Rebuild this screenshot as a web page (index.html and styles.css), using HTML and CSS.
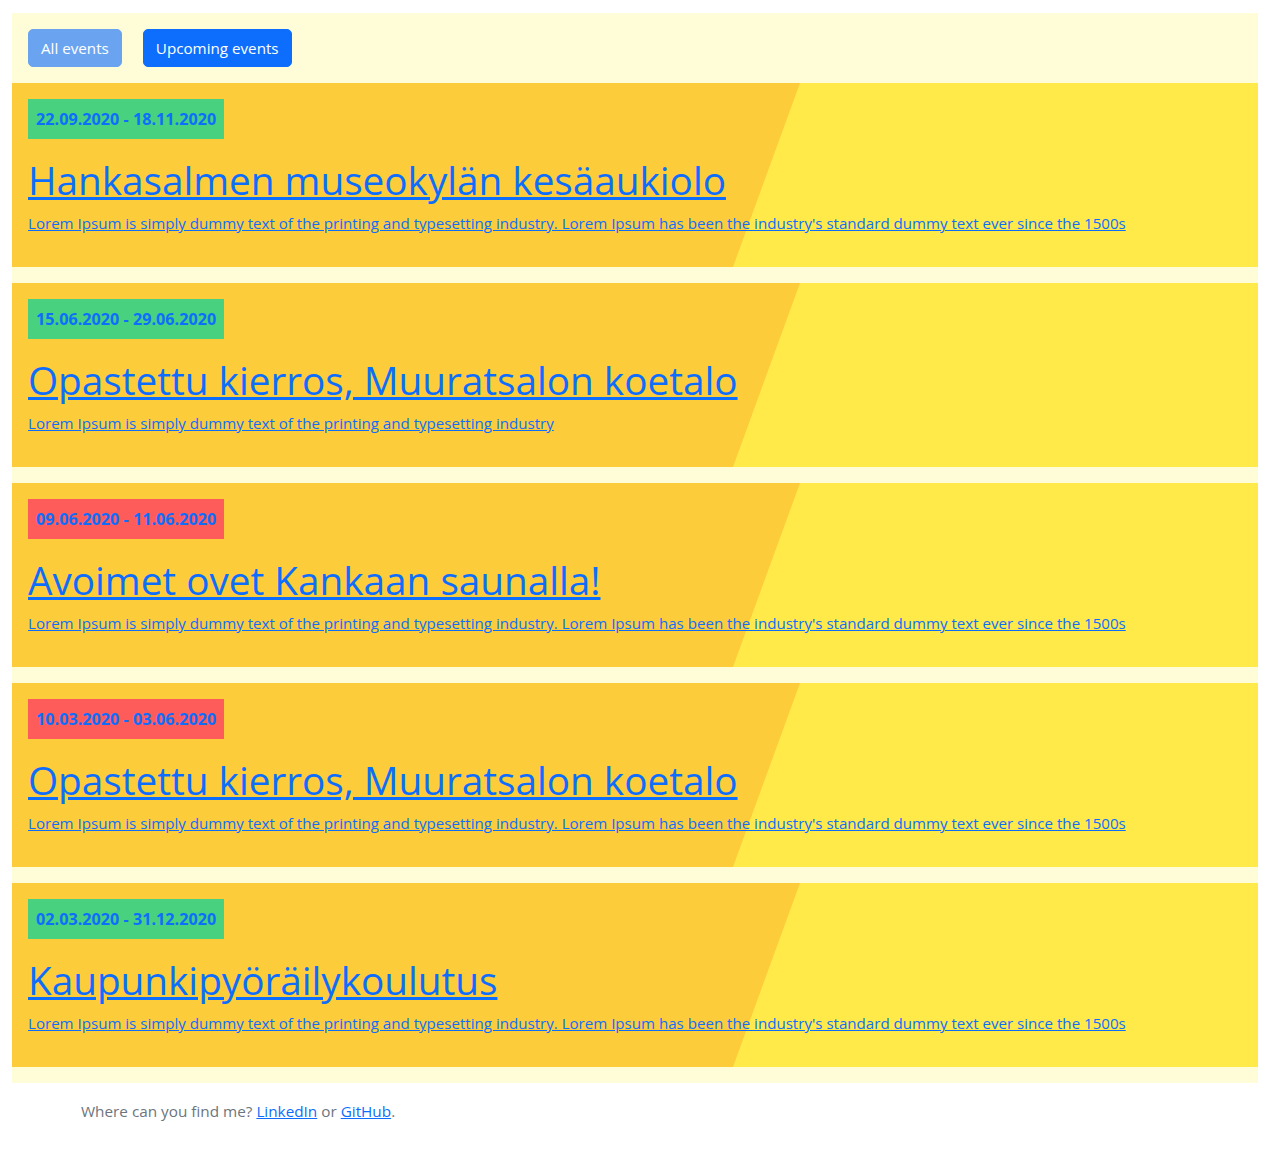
FILE: index.html
```html
<!DOCTYPE html>
<html lang="en">
<head>
<meta charset="utf-8">
<title>Events</title>
<link rel="stylesheet" href="styles.css">
</head>
<body>
<div class="page">
  <div class="toolbar">
    <button class="btn btn-disabled" type="button">All events</button>
    <button class="btn" type="button">Upcoming events</button>
  </div>
  <div class="events">
    <div class="event">
      <span class="badge green">22.09.2020 - 18.11.2020</span>
      <h1 class="title"><a href="#">Hankasalmen museokylän kesäaukiolo</a></h1>
      <p class="desc"><a href="#">Lorem Ipsum is simply dummy text of the printing and typesetting industry. Lorem Ipsum has been the industry's standard dummy text ever since the 1500s</a></p>
    </div>
    <div class="event">
      <span class="badge green">15.06.2020 - 29.06.2020</span>
      <h1 class="title"><a href="#">Opastettu kierros, Muuratsalon koetalo</a></h1>
      <p class="desc"><a href="#">Lorem Ipsum is simply dummy text of the printing and typesetting industry</a></p>
    </div>
    <div class="event">
      <span class="badge red">09.06.2020 - 11.06.2020</span>
      <h1 class="title"><a href="#">Avoimet ovet Kankaan saunalla!</a></h1>
      <p class="desc"><a href="#">Lorem Ipsum is simply dummy text of the printing and typesetting industry. Lorem Ipsum has been the industry's standard dummy text ever since the 1500s</a></p>
    </div>
    <div class="event">
      <span class="badge red">10.03.2020 - 03.06.2020</span>
      <h1 class="title"><a href="#">Opastettu kierros, Muuratsalon koetalo</a></h1>
      <p class="desc"><a href="#">Lorem Ipsum is simply dummy text of the printing and typesetting industry. Lorem Ipsum has been the industry's standard dummy text ever since the 1500s</a></p>
    </div>
    <div class="event">
      <span class="badge green">02.03.2020 - 31.12.2020</span>
      <h1 class="title"><a href="#">Kaupunkipyöräilykoulutus</a></h1>
      <p class="desc"><a href="#">Lorem Ipsum is simply dummy text of the printing and typesetting industry. Lorem Ipsum has been the industry's standard dummy text ever since the 1500s</a></p>
    </div>
  </div>
</div>
<footer class="footer">Where can you find me? <a href="#">LinkedIn</a> or <a href="#">GitHub</a>.</footer>
</body>
</html>
```
FILE: styles.css
```css
* { box-sizing: border-box; }
body {
  margin: 0;
  font-family: "Open Sans", "Noto Sans", sans-serif;
  font-size: 16px;
  line-height: 1.5;
  color: #212529;
  background: #fff;
}
a { color: #0d6efd; text-decoration: underline; }
.page {
  margin: 13px 7px 0 12px;
  background: #fffdd8;
  padding-bottom: 16px;
}
.toolbar {
  display: flex;
  gap: 21px;
  padding: 16px;
}
.btn {
  font-family: inherit;
  font-size: 15.2px;
  line-height: 24px;
  padding: 6px 12px;
  border: 1px solid #0d6efd;
  border-radius: 5px;
  background: #0d6efd;
  color: #fff;
}
.btn-disabled {
  background: #6aa4f1;
  border-color: #6aa4f1;
}
.events {
  display: flex;
  flex-direction: column;
  gap: 16px;
}
.event {
  position: relative;
  background: #ffea49;
  padding: 16px 16px 0;
  height: 184px;
  overflow: hidden;
}
.event::before {
  content: "";
  position: absolute;
  inset: 0;
  background: #fdcc3a;
  clip-path: polygon(0 0, 788px 0, 721px 100%, 0 100%);
}
.event > * { position: relative; }
.badge {
  display: inline-block;
  height: 40px;
  padding: 8px;
  font-weight: 700;
  font-size: 16.2px;
  line-height: 24px;
  color: #0d6efd;
}
.green { background: #48d17e; }
.red { background: #fe5c5a; }
.title {
  margin: 17px 0 7px;
  font-size: 38.7px;
  font-weight: 500;
  line-height: 48px;
}
.desc {
  margin: 0;
  font-size: 15.1px;
  line-height: 24px;
}
.footer {
  padding: 16px 69px;
  margin-left: 12px;
  color: #6c757d;
  font-size: 15.3px;
  line-height: 24px;
}
```
